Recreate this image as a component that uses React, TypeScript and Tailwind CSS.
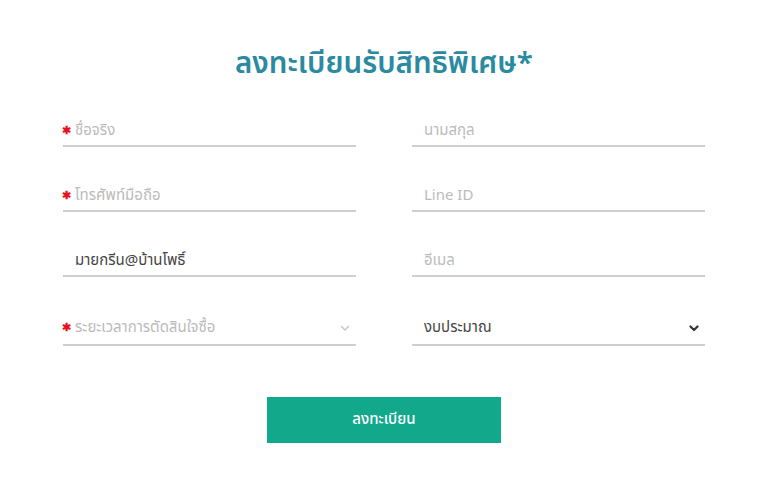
import React from 'react';

const font = { fontFamily: '"Noto Sans Thai", "Noto Sans", "Liberation Sans", sans-serif' };

const Star = () => (
  <span className="absolute left-[-1px] top-1/2 mt-[2px] -translate-y-1/2 text-[11px] font-bold leading-none text-[#e3141e]">✱</span>
);

const Field: React.FC<{ placeholder?: string; value?: string; required?: boolean }> = ({ placeholder, value, required }) => (
  <div className="relative flex h-[36px] items-center border-b-2 border-[#cfcfcf] pl-[12px] pr-[6px] pt-[6px]">
    {required && <Star />}
    <input
      defaultValue={value}
      placeholder={placeholder}
      className="w-full bg-transparent text-[15px] text-[#454545] outline-none placeholder:text-[#bbbbbb]"
      style={font}
    />
  </div>
);

const Select: React.FC<{ label: string; required?: boolean; dark?: boolean }> = ({ label, required, dark }) => (
  <div className="relative flex h-[40px] items-center border-b-2 border-[#cfcfcf] pl-[12px] pr-[6px] pt-[6px]">
    {required && <Star />}
    <span className={`flex-1 text-[15px] ${dark ? 'text-[#454545]' : 'text-[#bbbbbb]'}`} style={font}>
      {label}
    </span>
    <svg width="10" height="7" viewBox="0 0 10 7">
      <path
        d="M1.5 1.5 L5 5 L8.5 1.5"
        fill="none"
        stroke={dark ? '#333' : '#c4c4c4'}
        strokeWidth={dark ? 2.2 : 1.3}
        strokeLinecap="round"
        strokeLinejoin="round"
      />
    </svg>
  </div>
);

export default function App() {
  return (
    <div className="min-h-[491px] w-full bg-white pt-[44px]" style={font}>
      <h1 className="h-[40px] text-center text-[29.5px] font-semibold leading-[40px] text-[#2b8aa0]">
        ลงทะเบียนรับสิทธิพิเศษ*
      </h1>
      <div className="mx-auto mt-[27px] grid w-[642px] grid-cols-2 gap-x-[56px] gap-y-[29px]">
        <Field placeholder="ชื่อจริง" required />
        <Field placeholder="นามสกุล" />
        <Field placeholder="โทรศัพท์มือถือ" required />
        <Field placeholder="Line ID" />
        <Field value="มายกรีน@บ้านโพธิ์" />
        <Field placeholder="อีเมล" />
        <Select label="ระยะเวลาการตัดสินใจซื้อ" required />
        <Select label="งบประมาณ" dark />
      </div>
      <div className="mt-[51px] flex justify-center">
        <button className="h-[46px] w-[234px] bg-[#12a88c] text-[15px] font-medium text-white">ลงทะเบียน</button>
      </div>
    </div>
  );
}
